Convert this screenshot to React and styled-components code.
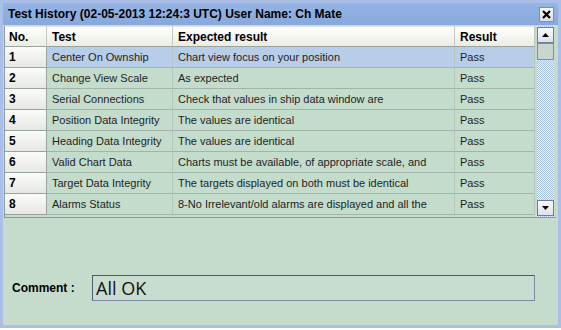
import React from 'react';
import styled, { createGlobalStyle } from 'styled-components';

const rows = [
  ['1', 'Center On Ownship', 'Chart view focus on your position', 'Pass'],
  ['2', 'Change View Scale', 'As expected', 'Pass'],
  ['3', 'Serial Connections', 'Check that values in ship data window are', 'Pass'],
  ['4', 'Position Data Integrity', 'The values are identical', 'Pass'],
  ['5', 'Heading Data Integrity', 'The values are identical', 'Pass'],
  ['6', 'Valid Chart Data', 'Charts must be available, of appropriate scale, and', 'Pass'],
  ['7', 'Target Data Integrity', 'The targets displayed on both must be identical', 'Pass'],
  ['8', 'Alarms Status', '8-No Irrelevant/old alarms are displayed and all the', 'Pass'],
];

const Global = createGlobalStyle`
  body {
    margin: 0;
    background: #fff;
    font-family: "Liberation Sans", Arial, sans-serif;
  }
`;

const Window = styled.div`
  box-sizing: border-box;
  width: 561px;
  height: 328px;
  background: #c5dccd;
  border: 3px solid #a9bfe7;
  box-shadow: 0 1px 0 #fff, 0 2px 0 #222;
  display: flex;
  flex-direction: column;
`;

const TitleBar = styled.div`
  height: 22px;
  display: flex;
  align-items: center;
  justify-content: space-between;
  padding: 0 4px 0 5px;
  background: linear-gradient(#96b5e5, #87a8dc);
  font-size: 12px;
  font-weight: bold;
  color: #000;
`;

const CloseBtn = styled.div`
  width: 15px;
  height: 15px;
  box-sizing: border-box;
  border: 1px solid #7f8fa8;
  background: linear-gradient(#f8f8f8, #d8dce4);
  display: flex;
  align-items: center;
  justify-content: center;
`;

const Body = styled.div`
  flex: 1;
  display: flex;
  flex-direction: column;
  padding: 1px 2px 0 1px;
`;

const TableWrap = styled.div`
  display: flex;
  height: 191px;
  border-left: 1px solid #8a9aa0;
  border-bottom: 1px solid #8a9aa0;
`;

const Grid = styled.div`
  display: grid;
  grid-template-columns: 42px 126px 282px 80px;
  grid-auto-rows: 21px;
  width: 530px;
  align-content: start;
`;

const HeaderCell = styled.div`
  display: flex;
  align-items: center;
  padding-left: ${(p) => (p.$first ? 4 : 5)}px;
  background: linear-gradient(#ffffff, #ecece4);
  border-right: 1px solid #c2c6c0;
  border-bottom: 1px solid #9aa49e;
  border-top: 1px solid #e0e4e0;
  font-size: 12px;
  font-weight: bold;
  box-sizing: border-box;
`;

const NumCell = styled.div`
  display: flex;
  align-items: center;
  padding-left: 4px;
  box-sizing: border-box;
  background: linear-gradient(#fbfbfb, #e6e8e2);
  border-right: 1px solid #9aa49e;
  border-bottom: 1px solid #9aa49e;
  font-size: 12px;
  font-weight: bold;
`;

const Cell = styled.div`
  display: flex;
  align-items: center;
  padding-left: 5px;
  box-sizing: border-box;
  background: ${(p) => (p.$selected ? '#b8cde7' : '#c4dccc')};
  border-right: 1px solid #b6c6bc;
  border-bottom: 1px solid #a4b4aa;
  font-size: 11px;
  color: #1e1e1e;
  white-space: nowrap;
  overflow: hidden;
`;

const ScrollBar = styled.div`
  width: 17px;
  margin-left: 2px;
  display: flex;
  flex-direction: column;
  background: repeating-conic-gradient(#a9c0e6 0 25%, #eef2fa 0 50%) 0 0 / 2px 2px;
`;

const ArrowBtn = styled.div`
  height: 16px;
  box-sizing: border-box;
  border: 1px solid #6e7e98;
  background: linear-gradient(#fafafa, #dde2ea);
  display: flex;
  align-items: center;
  justify-content: center;
  margin-top: ${(p) => (p.$down ? 'auto' : '1px')};
  margin-bottom: ${(p) => (p.$down ? '1px' : '0')};
`;

const Thumb = styled.div`
  height: 17px;
  box-sizing: border-box;
  border: 1px solid #7d8ca4;
  background: #c9d6cf;
`;

const CommentRow = styled.div`
  display: flex;
  align-items: center;
  margin-top: 57px;
  padding-left: 8px;
`;

const Label = styled.div`
  width: 80px;
  font-size: 12px;
  font-weight: bold;
`;

const Input = styled.div`
  width: 443px;
  height: 26px;
  box-sizing: border-box;
  border: 1px solid #7f8aa6;
  border-top-color: #4e5a70;
  border-left-color: #4e5a70;
  background: #c8dcd0;
  display: flex;
  align-items: center;
  padding-left: 3px;
  font-family: "Open Sans", "Liberation Sans", sans-serif;
  font-size: 18px;
  color: #111;
`;

const Arrow = ({ down }) => (
  <svg width="7" height="4" viewBox="0 0 7 4">
    <polygon points={down ? '0,0 7,0 3.5,4' : '0,4 7,4 3.5,0'} fill="#000" />
  </svg>
);

export default function App() {
  return (
    <>
      <Global />
      <Window>
        <TitleBar>
          <span>Test History (02-05-2013 12:24:3 UTC) User Name: Ch Mate</span>
          <CloseBtn>
            <svg width="9" height="9" viewBox="0 0 9 9">
              <path d="M1 1L8 8M8 1L1 8" stroke="#000" strokeWidth="2.2" />
            </svg>
          </CloseBtn>
        </TitleBar>
        <Body>
          <TableWrap>
            <Grid>
              <HeaderCell $first>No.</HeaderCell>
              <HeaderCell>Test</HeaderCell>
              <HeaderCell>Expected result</HeaderCell>
              <HeaderCell>Result</HeaderCell>
              {rows.map((r, i) => (
                <React.Fragment key={r[0]}>
                  <NumCell>{r[0]}</NumCell>
                  <Cell $selected={i === 0}>{r[1]}</Cell>
                  <Cell $selected={i === 0}>{r[2]}</Cell>
                  <Cell $selected={i === 0}>{r[3]}</Cell>
                </React.Fragment>
              ))}
            </Grid>
            <ScrollBar>
              <ArrowBtn>
                <Arrow />
              </ArrowBtn>
              <Thumb />
              <ArrowBtn $down>
                <Arrow down />
              </ArrowBtn>
            </ScrollBar>
          </TableWrap>
          <CommentRow>
            <Label>Comment :</Label>
            <Input>All OK</Input>
          </CommentRow>
        </Body>
      </Window>
    </>
  );
}
